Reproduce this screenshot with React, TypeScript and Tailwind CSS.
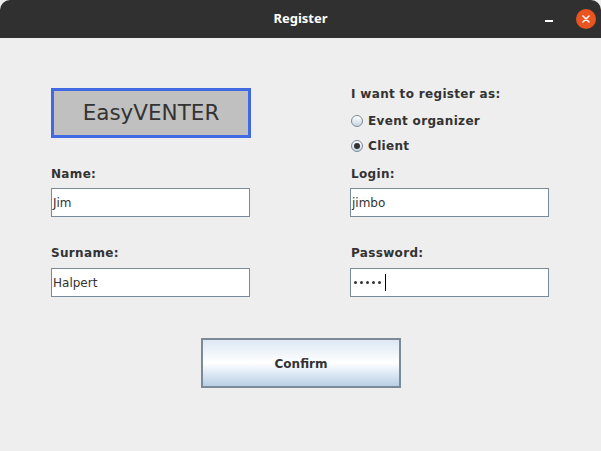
import React from 'react';

const font = { fontFamily: '"DejaVu Sans", sans-serif' };

function Field({ value, password }: { value: string; password?: boolean }) {
  return (
    <div className="h-[29px] w-[199px] border border-[#7a8a99] bg-white flex items-center pl-[1px] text-[12px] text-[#333]">
      {password ? (
        <div className="flex items-center gap-[3px] pl-[2px]">
          {[0, 1, 2, 3, 4].map((i) => (
            <span key={i} className="w-[3px] h-[3px] rounded-full bg-[#333]" />
          ))}
          <span className="w-px h-[17px] bg-black ml-[1px]" />
        </div>
      ) : (
        <span>{value}</span>
      )}
    </div>
  );
}

function Radio({ label, checked }: { label: string; checked?: boolean }) {
  return (
    <div className="flex items-center h-[16px] gap-[5px] pl-[1px]">
      <span className="w-[12px] h-[12px] rounded-full border border-[#7a8a99] bg-gradient-to-b from-white to-[#c8d4e0] flex items-center justify-center">
        {checked && <span className="w-[6px] h-[6px] rounded-full bg-[#333]" />}
      </span>
      <span className="text-[12px] font-bold text-[#333] tracking-[0.33px]">{label}</span>
    </div>
  );
}

export default function App() {
  return (
    <div className="w-[601px] h-[451px] bg-[#eeeeee] overflow-hidden" style={font}>
      <div className="h-[38px] bg-[#303030] rounded-t-[10px] flex items-center justify-center relative">
        <span className="text-[13px] font-bold text-white" style={{ fontFamily: '"Noto Sans", sans-serif' }}>
          Register
        </span>
        <span className="absolute left-[545px] top-[20px] w-[8px] h-[1.5px] bg-white" />
        <span className="absolute left-[576px] top-[9px] w-[20px] h-[20px] rounded-full bg-[#e95420] flex items-center justify-center">
          <svg width="8" height="8" viewBox="0 0 8 8">
            <path d="M1 1L7 7M7 1L1 7" stroke="white" strokeWidth="1.5" strokeLinecap="round" />
          </svg>
        </span>
      </div>

      <div className="flex pl-[51px] gap-[100px]">
        <div className="flex flex-col w-[199px]">
          <div className="mt-[50px] h-[50px] w-[200px] border-[3px] border-[#4169e1] bg-[#c0c0c0] flex items-center justify-center text-[21.5px] text-[#333]">
            EasyVENTER
          </div>
          <div className="mt-[28px] h-[16px] text-[12px] font-bold text-[#333] leading-[16px] tracking-[0.33px]">Name:</div>
          <div className="mt-[6px]">
            <Field value="Jim" />
          </div>
          <div className="mt-[28px] h-[16px] text-[12px] font-bold text-[#333] leading-[16px] tracking-[0.33px]">Surname:</div>
          <div className="mt-[7px]">
            <Field value="Halpert" />
          </div>
        </div>

        <div className="flex flex-col w-[200px]">
          <div className="mt-[48px] h-[16px] pl-[1px] text-[12px] font-bold text-[#333] leading-[16px] tracking-[0.33px]">
            I want to register as:
          </div>
          <div className="mt-[11px]">
            <Radio label="Event organizer" />
          </div>
          <div className="mt-[9px]">
            <Radio label="Client" checked />
          </div>
          <div className="mt-[12px] h-[16px] pl-[1px] text-[12px] font-bold text-[#333] leading-[16px] tracking-[0.33px]">Login:</div>
          <div className="mt-[6px]">
            <Field value="jimbo" />
          </div>
          <div className="mt-[28px] h-[16px] pl-[1px] text-[12px] font-bold text-[#333] leading-[16px] tracking-[0.33px]">Password:</div>
          <div className="mt-[7px]">
            <Field value="" password />
          </div>
        </div>
      </div>

      <div className="flex justify-center pl-[1px] mt-[41px]">
        <button className="w-[200px] h-[50px] pt-[2px] border-2 border-[#7a8a99] bg-gradient-to-b from-[#dde8f3] via-white to-[#b8cfe5] text-[12px] font-bold text-[#333]">
          Confirm
        </button>
      </div>
    </div>
  );
}
